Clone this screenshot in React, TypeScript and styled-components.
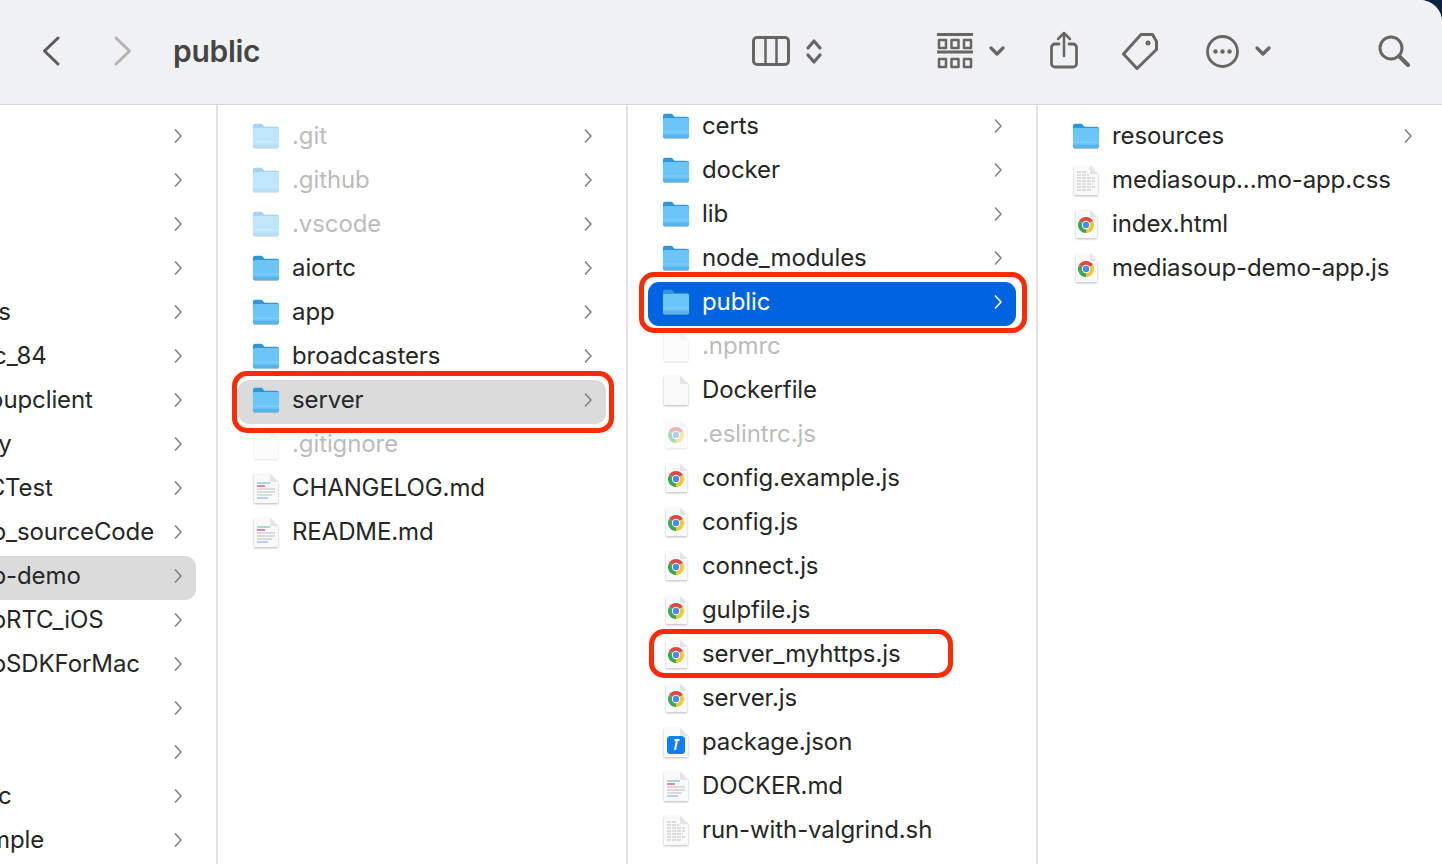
import * as React from 'react';
import styled, { createGlobalStyle } from 'styled-components';

const GlobalStyle = createGlobalStyle`
  html, body {
    margin: 0;
    padding: 0;
    background: #0b2140;
    font-family: Inter, "Noto Sans", sans-serif;
  }
`;

const Window = styled.div`
  width: 1442px;
  height: 864px;
  display: flex;
  flex-direction: column;
  background: #fff;
  border-top-right-radius: 22px;
  overflow: hidden;
`;

const Toolbar = styled.div`
  height: 105px;
  flex: none;
  box-sizing: border-box;
  display: flex;
  align-items: center;
  background: #f0f1f3;
  border-bottom: 1px solid #d6d6d7;
  padding: 0 0 2px 42px;
`;

const NavButton = styled.div<{ $ml?: number }>`
  display: flex;
  align-items: center;
  margin-left: ${p => p.$ml || 0}px;
`;

const Title = styled.div`
  width: 86px;
  margin-left: 41px;
  font-size: 30px;
  font-weight: 600;
  letter-spacing: -0.3px;
  color: #454545;
`;

const Tools = styled.div`
  display: flex;
  align-items: center;
  margin-left: 493px;
`;

const Tool = styled.div<{ $ml?: number }>`
  display: flex;
  align-items: center;
  gap: 16px;
  margin-left: ${p => p.$ml || 0}px;
`;

const Columns = styled.div`
  flex: 1;
  display: flex;
  min-height: 0;
`;

const Column = styled.div<{ $width: number; $top: number; $first?: boolean }>`
  width: ${p => p.$width}px;
  flex: none;
  box-sizing: border-box;
  padding-top: ${p => p.$top}px;
  padding-left: ${p => (p.$first ? 0 : 20)}px;
  border-right: 2px solid #e4e4e4;
  overflow: hidden;

  &:last-child {
    border-right: none;
  }
`;

const Row = styled.div<{ $sel?: 'gray' | 'blue' }>`
  position: relative;
  width: 368px;
  height: 44px;
  box-sizing: border-box;
  display: flex;
  align-items: center;
  padding: 0 0 4px 14px;
  border-radius: 11px;
  background: ${p => (p.$sel === 'gray' ? '#dbdbdb' : p.$sel === 'blue' ? '#0064e1' : 'transparent')};
`;

const FirstColumnRows = styled.div`
  margin-left: -172px;
`;

const IconSlot = styled.div<{ $dim?: boolean }>`
  width: 28px;
  height: 34px;
  flex: none;
  display: flex;
  align-items: center;
  justify-content: center;
  opacity: ${p => (p.$dim ? 0.42 : 1)};
`;

const Label = styled.div<{ $dim?: boolean; $white?: boolean }>`
  margin-left: 12px;
  font-size: 24px;
  line-height: 30px;
  letter-spacing: -0.1px;
  white-space: nowrap;
  color: ${p => (p.$white ? '#fff' : p.$dim ? '#bcbcbc' : '#262626')};
`;

const Chevron = styled.svg`
  position: absolute;
  right: 14px;
  top: 12px;
`;

const Highlight = styled.div<{ $t: number; $r: number; $b: number; $l: number }>`
  position: absolute;
  top: ${p => p.$t}px;
  right: ${p => p.$r}px;
  bottom: ${p => p.$b}px;
  left: ${p => p.$l}px;
  border: 5px solid #fb2b03;
  border-radius: 15px;
  z-index: 2;
  pointer-events: none;
`;

const PageSvg = styled.svg`
  filter: drop-shadow(0 1px 1px rgba(0, 0, 0, 0.28));
`;

type Kind = 'folder' | 'blank' | 'chrome' | 'md' | 'text' | 'json';

function FolderIcon() {
  return (
    <svg width="30" height="30" viewBox="0 0 30 30">
      <path d="M1 4.500a2.500 2.500 0 0 1 2.500-2.500h7l3 3h13a2.500 2.500 0 0 1 2.500 2.500v5H1z" fill="#2f97d8" />
      <rect x="1" y="6.500" width="28" height="21.500" rx="2" fill="#6cc5f8" />
      <rect x="1" y="21" width="28" height="1" fill="#86d1fa" />
      <path d="M1 24.500h28v1.500a2 2 0 0 1-2 2H3a2 2 0 0 1-2-2z" fill="#58b3ec" />
      <rect x="2" y="28" width="26" height="1" fill="#8c9aa6" opacity="0.5" />
    </svg>
  );
}

function Page({ narrow, children }: { narrow?: boolean; children?: React.ReactNode }) {
  const body = narrow
    ? 'M4 3h14l7 7v21H4z'
    : 'M2 3h16l8 8v21H2z';
  const fold = narrow ? 'M18 3v7h7z' : 'M18 3v8h8z';
  return (
    <PageSvg width="28" height="34" viewBox="0 0 28 34">
      <path d={body} fill="#f9f9f9" />
      <path d={fold} fill="#e4e4e4" />
      {children}
    </PageSvg>
  );
}

function FileIcon({ kind }: { kind: Kind }) {
  if (kind === 'folder') return <FolderIcon />;
  if (kind === 'chrome') {
    return (
      <Page narrow>
        <path d="M14 18L7.070 14A8 8 0 0 1 20.930 14z" fill="#dd4a3d" />
        <path d="M14 18L20.930 14A8 8 0 0 1 14 26z" fill="#f5c433" />
        <path d="M14 18L14 26A8 8 0 0 1 7.070 14z" fill="#3aa757" />
        <circle cx="14" cy="18" r="4.200" fill="#fff" />
        <circle cx="14" cy="18" r="3.200" fill="#4a8bf0" />
      </Page>
    );
  }
  if (kind === 'json') {
    return (
      <Page>
        <rect x="5" y="11" width="18" height="18" rx="3.500" fill="#0f7ff5" />
        <path d="M12.500 15h5M15 15l-2 10" stroke="#fff" strokeWidth="2" fill="none" />
      </Page>
    );
  }
  if (kind === 'md') {
    return (
      <Page>
        <path d="M5 12h13" stroke="#6cc9b8" strokeWidth="1.200" />
        <path d="M5 15h8" stroke="#e0559f" strokeWidth="1.500" />
        <path d="M5 18h18M5 21h18M5 24h15" stroke="#bdbdbd" strokeWidth="1" />
        <path d="M5 27h11" stroke="#7ba7e8" strokeWidth="1" />
      </Page>
    );
  }
  if (kind === 'text') {
    return (
      <Page>
        <path d="M5 9h10M5 12h12M5 15h18M5 18h18M5 21h16M5 24h18M5 27h14" stroke="#c2c2c2" strokeWidth="1.200" strokeDasharray="4 1" />
      </Page>
    );
  }
  return <Page />;
}

function RowChevron({ white }: { white?: boolean }) {
  return (
    <Chevron width="8" height="16" viewBox="0 0 8 16">
      <path d="M1 1.500L7 8l-6 6.500" fill="none" stroke={white ? '#fff' : '#808080'} strokeWidth="1.600" />
    </Chevron>
  );
}

interface Entry {
  name: string;
  kind?: Kind;
  dim?: boolean;
  sel?: 'gray' | 'blue';
  mark?: [number, number, number, number];
}

const firstColumn: Entry[] = [
  { name: 'agora' },
  { name: 'build' },
  { name: 'demo' },
  { name: 'docs' },
  { name: 'demo_tools' },
  { name: 'libstwebrtc_84' },
  { name: 'libmediasoupclient' },
  { name: 'code_study' },
  { name: 'libWebRTCTest' },
  { name: 'mediasoup_sourceCode' },
  { name: 'mediasoup-demo', sel: 'gray' },
  { name: 'mediasoupRTC_iOS' },
  { name: 'mediasoupSDKForMac' },
  { name: 'tools' },
  { name: 'utils' },
  { name: 'webrtc_spc' },
  { name: 'code_example' },
];

const secondColumn: Entry[] = [
  { name: '.git', dim: true },
  { name: '.github', dim: true },
  { name: '.vscode', dim: true },
  { name: 'aiortc' },
  { name: 'app' },
  { name: 'broadcasters' },
  { name: 'server', sel: 'gray', mark: [-9, -8, -9, -6] },
  { name: '.gitignore', kind: 'blank', dim: true },
  { name: 'CHANGELOG.md', kind: 'md' },
  { name: 'README.md', kind: 'md' },
];

const thirdColumn: Entry[] = [
  { name: 'certs' },
  { name: 'docker' },
  { name: 'lib' },
  { name: 'node_modules' },
  { name: 'public', sel: 'blue', mark: [-10, -11, -7, -9] },
  { name: '.npmrc', kind: 'blank', dim: true },
  { name: 'Dockerfile', kind: 'blank' },
  { name: '.eslintrc.js', kind: 'chrome', dim: true },
  { name: 'config.example.js', kind: 'chrome' },
  { name: 'config.js', kind: 'chrome' },
  { name: 'connect.js', kind: 'chrome' },
  { name: 'gulpfile.js', kind: 'chrome' },
  { name: 'server_myhttps.js', kind: 'chrome', mark: [-5, 63, 0, 1] },
  { name: 'server.js', kind: 'chrome' },
  { name: 'package.json', kind: 'json' },
  { name: 'DOCKER.md', kind: 'md' },
  { name: 'run-with-valgrind.sh', kind: 'text' },
];

const fourthColumn: Entry[] = [
  { name: 'resources' },
  { name: 'mediasoup...mo-app.css', kind: 'text' },
  { name: 'index.html', kind: 'chrome' },
  { name: 'mediasoup-demo-app.js', kind: 'chrome' },
];

function EntryRow({ entry }: { entry: Entry }) {
  const kind = entry.kind || 'folder';
  return (
    <Row $sel={entry.sel}>
      <IconSlot $dim={entry.dim}>
        <FileIcon kind={kind} />
      </IconSlot>
      <Label $dim={entry.dim} $white={entry.sel === 'blue'}>
        {entry.name}
      </Label>
      {kind === 'folder' && <RowChevron white={entry.sel === 'blue'} />}
      {entry.mark && <Highlight $t={entry.mark[0]} $r={entry.mark[1]} $b={entry.mark[2]} $l={entry.mark[3]} />}
    </Row>
  );
}

const toolStroke = { fill: 'none', stroke: '#666', strokeLinecap: 'round', strokeLinejoin: 'round' } as const;

function SmallChevron() {
  return (
    <svg width="16" height="10" viewBox="0 0 16 10">
      <path d="M2 2l6 6 6-6" {...toolStroke} strokeWidth="3.200" />
    </svg>
  );
}

export default function App() {
  return (
    <Window>
      <GlobalStyle />
      <Toolbar>
        <NavButton>
          <svg width="18" height="30" viewBox="0 0 18 30">
            <path d="M16 2L2.500 15 16 28" fill="none" stroke="#5a5a5a" strokeWidth="3" strokeLinecap="round" strokeLinejoin="round" />
          </svg>
        </NavButton>
        <NavButton $ml={54}>
          <svg width="18" height="30" viewBox="0 0 18 30">
            <path d="M2 2l13.500 13L2 28" fill="none" stroke="#b4b4b4" strokeWidth="3" strokeLinecap="round" strokeLinejoin="round" />
          </svg>
        </NavButton>
        <Title>public</Title>
        <Tools>
          <Tool>
            <svg width="38" height="30" viewBox="0 0 38 30">
              <rect x="1.500" y="1.500" width="35" height="27" rx="3.500" {...toolStroke} strokeWidth="3" />
              <path d="M13.500 2v26M24.500 2v26" {...toolStroke} strokeWidth="2.500" />
            </svg>
            <svg width="16" height="27" viewBox="0 0 16 27">
              <path d="M2 10l6-7 6 7M2 17l6 7 6-7" {...toolStroke} strokeWidth="3.200" />
            </svg>
          </Tool>
          <Tool $ml={115}>
            <svg width="36" height="36" viewBox="0 0 36 36">
              <path d="M0 1.500h36M0 19h36" fill="none" stroke="#666" strokeWidth="3" />
              <path d="M2 7h7v8H2zM14.500 7h7v8h-7zM27 7h7v8h-7zM2 26h7v8H2zM14.500 26h7v8h-7zM27 26h7v8h-7z" {...toolStroke} strokeWidth="2.500" />
            </svg>
            <SmallChevron />
          </Tool>
          <Tool $ml={45}>
            <svg width="28" height="40" viewBox="0 0 28 40">
              <path d="M9 13H5a3.500 3.500 0 0 0-3.500 3.500v16A3.500 3.500 0 0 0 5 36h18a3.500 3.500 0 0 0 3.500-3.500v-16A3.500 3.500 0 0 0 23 13h-4" {...toolStroke} strokeWidth="2.800" />
              <path d="M14 25V2M8 8l6-6 6 6" {...toolStroke} strokeWidth="2.500" />
            </svg>
          </Tool>
          <Tool $ml={44}>
            <svg width="36" height="37" viewBox="0 0 36 37">
              <path d="M19 1.500h11.500l4 7v8L15 35.500 1.500 21z" {...toolStroke} strokeWidth="3" />
              <circle cx="26" cy="10" r="2.500" fill="#666" />
            </svg>
          </Tool>
          <Tool $ml={48}>
            <svg width="33" height="33" viewBox="0 0 33 33">
              <circle cx="16.500" cy="16.500" r="15" {...toolStroke} strokeWidth="2.800" />
              <circle cx="9.500" cy="16.500" r="2.200" fill="#666" />
              <circle cx="16.500" cy="16.500" r="2.200" fill="#666" />
              <circle cx="23.500" cy="16.500" r="2.200" fill="#666" />
            </svg>
            <SmallChevron />
          </Tool>
          <Tool $ml={107}>
            <svg width="32" height="32" viewBox="0 0 32 32">
              <circle cx="13" cy="13" r="11" {...toolStroke} strokeWidth="3" />
              <path d="M21 21l9 9" {...toolStroke} strokeWidth="4" />
            </svg>
          </Tool>
        </Tools>
      </Toolbar>
      <Columns>
        <Column $width={218} $top={11} $first>
          <FirstColumnRows>
            {firstColumn.map(e => (
              <EntryRow key={e.name} entry={e} />
            ))}
          </FirstColumnRows>
        </Column>
        <Column $width={410} $top={11}>
          {secondColumn.map(e => (
            <EntryRow key={e.name} entry={e} />
          ))}
        </Column>
        <Column $width={410} $top={1}>
          {thirdColumn.map(e => (
            <EntryRow key={e.name} entry={e} />
          ))}
        </Column>
        <Column $width={404} $top={11}>
          {fourthColumn.map(e => (
            <EntryRow key={e.name} entry={e} />
          ))}
        </Column>
      </Columns>
    </Window>
  );
}
